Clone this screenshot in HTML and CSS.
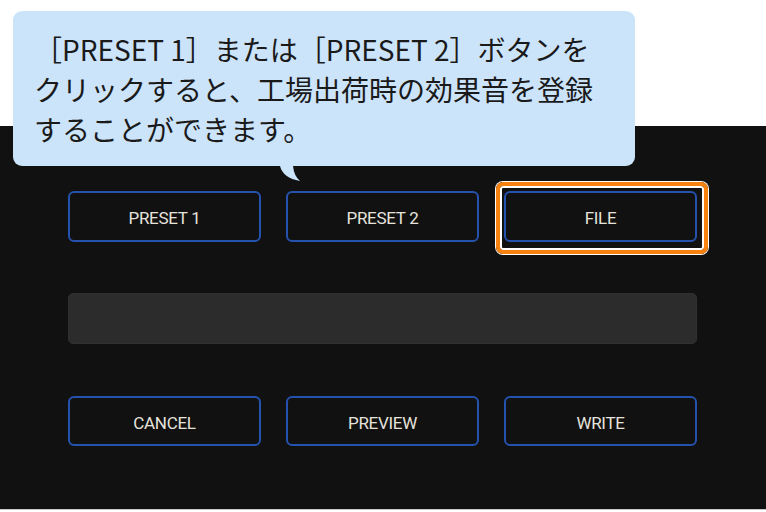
FILE: index.html
```html
<!DOCTYPE html>
<html lang="ja">
<head>
  <meta charset="UTF-8">
  <meta name="viewport" content="width=device-width, initial-scale=1.0">
  <title>Sound Settings</title>
  <link rel="stylesheet" href="styles.css">
</head>
<body>
  <div class="screen">
    <div class="panel">
      <div class="btn-row">
        <button class="btn">PRESET 1</button>
        <button class="btn">PRESET 2</button>
        <div class="btn-wrap">
          <button class="btn">FILE</button>
          <span class="focus-ring"></span>
        </div>
      </div>
      <div class="file-bar"></div>
      <div class="btn-row btn-row-bottom">
        <button class="btn">CANCEL</button>
        <button class="btn">PREVIEW</button>
        <button class="btn">WRITE</button>
      </div>
    </div>

    <div class="callout">
      <p class="callout-text">［PRESET 1］または［PRESET 2］ボタンを<br>クリックすると、工場出荷時の効果音を登録<br>することができます。</p>
      <svg class="callout-tail" width="22" height="16" viewBox="0 0 22 16">
        <path d="M0 0 Q3 12 20 15 Q14 10 13 0 Z" fill="#cce4fa"/>
      </svg>
    </div>
  </div>
</body>
</html>
```

FILE: styles.css
```css
body {
  margin: 0;
  background-color: #ffffff;
  font-family: Roboto, "Noto Sans", sans-serif;
}

.screen {
  position: relative;
  width: 766px;
  height: 512px;
  overflow: hidden;
}

.panel {
  box-sizing: border-box;
  margin-top: 126px;
  height: 384px;
  padding: 65px 0 0 68px;
  background-color: #111111;
  border-bottom: 1px solid #c8c8c8;
}

.btn-row {
  display: grid;
  grid-template-columns: repeat(3, 193px);
  column-gap: 25px;
  height: 51px;
}

.btn-row-bottom {
  margin-top: 52px;
  height: 50px;
}

.btn {
  box-sizing: border-box;
  width: 193px;
  height: 100%;
  padding: 3px 0 0;
  border: 2px solid #2452ad;
  border-radius: 6px;
  background-color: transparent;
  color: #e6e3dc;
  font-family: Roboto, "Noto Sans", sans-serif;
  font-size: 17px;
  letter-spacing: -0.3px;
}

.btn-wrap {
  position: relative;
  height: 51px;
}

.focus-ring {
  position: absolute;
  left: -8px;
  top: -9px;
  right: -11px;
  bottom: -12px;
  border: 4px solid #f7820f;
  border-radius: 7px;
  box-shadow: 0 0 0 1px #ffffff, inset 0 0 0 2px #ffffff;
}

.file-bar {
  box-sizing: border-box;
  width: 629px;
  height: 51px;
  margin-top: 51px;
  background-color: #2c2c2c;
  border: 1px solid #303030;
  border-radius: 5px;
}

.callout {
  position: absolute;
  left: 13px;
  top: 11px;
  width: 622px;
  height: 155px;
  background-color: #cce4fa;
  border-radius: 9px;
}

.callout-text {
  margin: 0;
  padding: 18px 0 0 21px;
  color: #1a1a1a;
  font-family: "Noto Sans CJK JP", sans-serif;
  font-size: 28px;
  line-height: 40px;
  white-space: nowrap;
}

.callout-tail {
  position: absolute;
  left: 267px;
  top: 155px;
}
```
